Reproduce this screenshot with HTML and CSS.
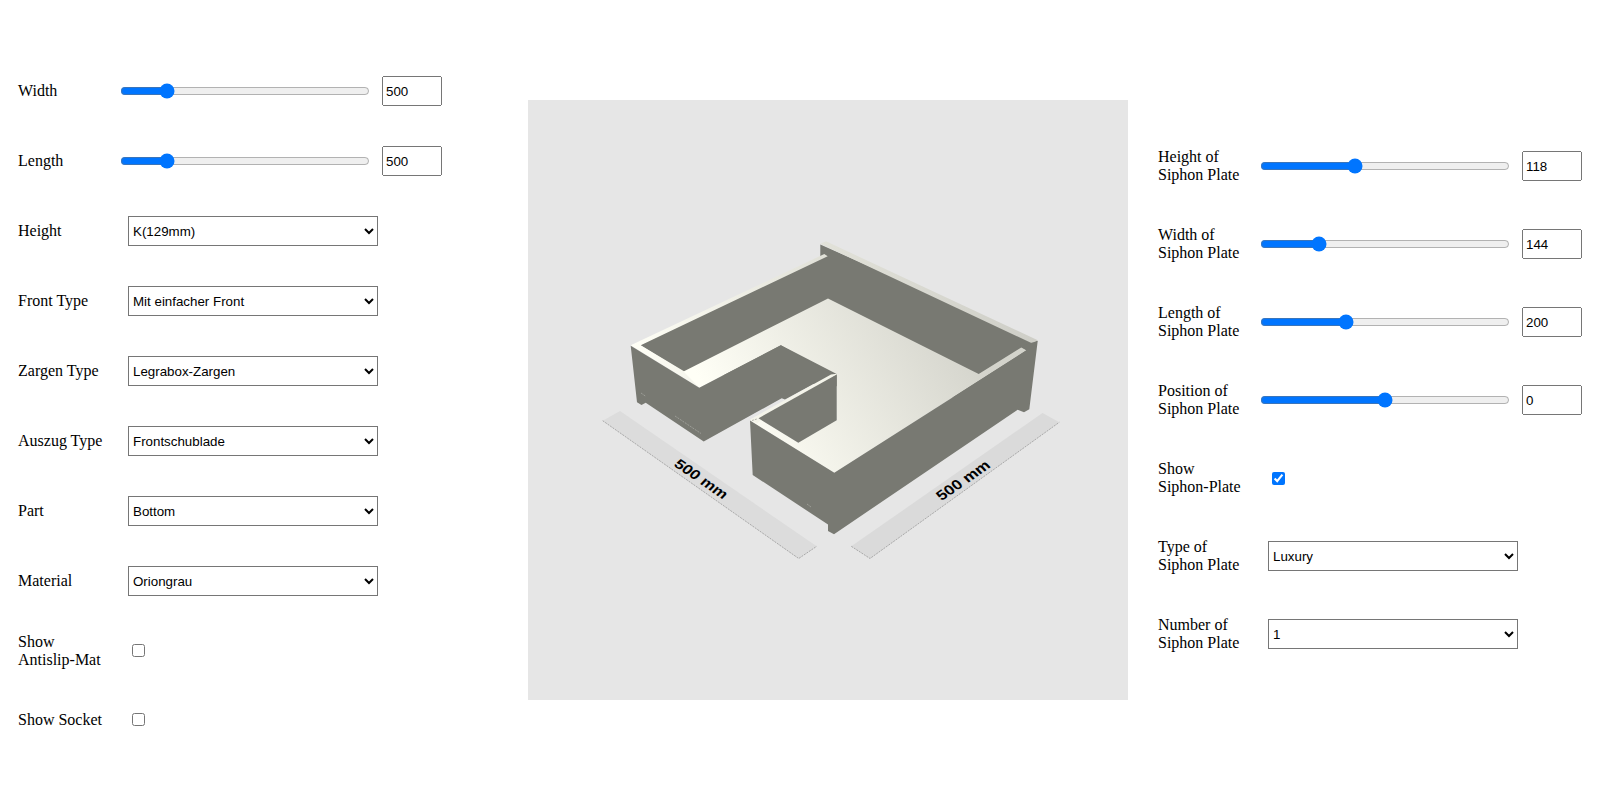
FILE: index.html
```html
<!DOCTYPE html>
<html lang="en">
<head>
<meta charset="utf-8">
<title>Drawer Configurator</title>
<link rel="stylesheet" href="styles.css">
</head>
<body>
<main class="configurator">
  <form class="panel panel-drawer">
    <div class="row"><label class="name">Width</label><input class="slider" type="range" min="0" max="1000" step="1" value="167"><input class="number" type="number" value="500"></div>
    <div class="row"><label class="name">Length</label><input class="slider" type="range" min="0" max="1000" step="1" value="167"><input class="number" type="number" value="500"></div>
    <div class="row"><label class="name">Height</label><select class="choice"><option>K(129mm)</option></select></div>
    <div class="row"><label class="name">Front Type</label><select class="choice"><option>Mit einfacher Front</option></select></div>
    <div class="row"><label class="name">Zargen Type</label><select class="choice"><option>Legrabox-Zargen</option></select></div>
    <div class="row"><label class="name">Auszug Type</label><select class="choice"><option>Frontschublade</option></select></div>
    <div class="row"><label class="name">Part</label><select class="choice"><option>Bottom</option></select></div>
    <div class="row"><label class="name">Material</label><select class="choice"><option>Oriongrau</option></select></div>
    <div class="row row-check"><label class="name">Show<br>Antislip-Mat</label><input class="check" type="checkbox"></div>
    <div class="row row-check"><label class="name">Show Socket</label><input class="check" type="checkbox"></div>
  </form>

  <svg class="viewer" viewBox="528 100 600 600" width="600" height="600">
    <defs>
      <linearGradient id="floor" gradientUnits="userSpaceOnUse" x1="700" y1="380" x2="917" y2="247">
        <stop offset="0" stop-color="#fffff6"/>
        <stop offset="1" stop-color="#d3d3cb"/>
      </linearGradient>
      <linearGradient id="ledge" gradientUnits="userSpaceOnUse" x1="820" y1="0" x2="1038" y2="0">
        <stop offset="0" stop-color="#e2e2d9"/>
        <stop offset="1" stop-color="#cecec7"/>
      </linearGradient>
      <linearGradient id="rim" gradientUnits="userSpaceOnUse" x1="631" y1="0" x2="828" y2="0">
        <stop offset="0" stop-color="#fffff6"/>
        <stop offset="1" stop-color="#e0e0d7"/>
      </linearGradient>
    </defs>

    <!-- front plate and inner walls -->
    <path fill="#787972" d="M820.3 244.5L1037.7 341L978.7 400L683 371.5L640 345L820.3 257Z"/>
    <path fill="url(#ledge)" d="M820.3 243.8L826 241.3L1037.8 340.3L1033 343.8Z"/>
    <path fill="url(#rim)" d="M630.7 345.3L824.3 254L827.7 256.3L640.7 345.3L684 371.2L700 388Z"/>

    <!-- bottom panel -->
    <path fill="url(#floor)" d="M683.5 371.5L828 298.5L978.7 374L1021.3 347.5L1026.5 350.3L834.3 473L750 420.5L759.3 418.5L798.3 442.7L836.7 420L836.7 374L781 345.3L699.3 387.8Z"/>

    <!-- left block -->
    <path fill="#787972" d="M630.7 345.8L699.3 387.8L780.7 345.3L831.5 374.2L785 399.5L781.7 398.2L703.7 441.5L645.7 402.8L641.5 405L637 402.3Z"/>

    <!-- right block -->
    <path fill="#787972" d="M750 420.5L834.3 472.7L1026.5 350.3L1020 346L1037.7 341L1029.3 409.3L1024 412.3L1017.7 409.7L834 534.2L828 531L828 524.5L752.7 475Z"/>

    <!-- siphon cut-out -->
    <path fill="#f4f4ea" d="M750 419.5L831 374.6L836.7 373.7L836.7 375L762 419L757 423.5Z"/>
    <path fill="#787972" d="M836.7 374.5L836.7 420.3L798.3 442.7L758.5 418.3Z"/>

    <g fill="none" stroke="#a5a69f" stroke-width="0.8" stroke-dasharray="2 1">
      <path d="M641 393L646 396.5M675 416L701 433.5M807 504L811 507M752 420.5L757 419"/>
    </g>

    <!-- dimension labels -->
    <path fill="#dcdcdc" d="M602.7 420.7L620 411L816.7 546.3L798.7 558.5Z"/>
    <path fill="#dadada" d="M851.3 546.3L1042.5 413L1059.3 422.3L870 558.5Z"/>
    <g fill="none" stroke="#a2a2a2" stroke-width="0.9" stroke-dasharray="2 1">
      <path d="M602.7 420.7L798.7 558.5L816.7 546.3"/>
      <path d="M851.3 546.3L870 558.5L1059.3 422.3"/>
    </g>
    <g class="dimension" text-anchor="middle">
      <text transform="matrix(.67 .46 -.49 .52 698 482.5)">500 mm</text>
      <text transform="matrix(.67 -.465 .5 .54 966.5 484)">500 mm</text>
    </g>
  </svg>

  <form class="panel panel-siphon">
    <div class="row"><label class="name">Height of<br>Siphon Plate</label><input class="slider" type="range" min="0" max="1000" step="1" value="372"><input class="number" type="number" value="118"></div>
    <div class="row"><label class="name">Width of<br>Siphon Plate</label><input class="slider" type="range" min="0" max="1000" step="1" value="218"><input class="number" type="number" value="144"></div>
    <div class="row"><label class="name">Length of<br>Siphon Plate</label><input class="slider" type="range" min="0" max="1000" step="1" value="333"><input class="number" type="number" value="200"></div>
    <div class="row"><label class="name">Position of<br>Siphon Plate</label><input class="slider" type="range" min="0" max="1000" step="1" value="500"><input class="number" type="number" value="0"></div>
    <div class="row"><label class="name">Show<br>Siphon-Plate</label><input class="check" type="checkbox" checked></div>
    <div class="row"><label class="name">Type of<br>Siphon Plate</label><select class="choice"><option>Luxury</option></select></div>
    <div class="row"><label class="name">Number of<br>Siphon Plate</label><select class="choice"><option>1</option></select></div>
  </form>
</main>
</body>
</html>
```
FILE: styles.css
```css
* {
  box-sizing: border-box;
}

body {
  margin: 0;
  background: #fff;
  color: #000;
  font: 16px/18px "Liberation Serif", serif;
}

.configurator {
  display: flex;
  align-items: flex-start;
  width: 1604px;
  height: 789px;
  overflow: hidden;
}

.panel {
  flex: none;
  margin: 0;
}

.panel-drawer {
  width: 528px;
  padding: 56px 0 0 18px;
}

.panel-siphon {
  width: 476px;
  padding: 127px 0 0 30px;
}

.row {
  display: flex;
  align-items: center;
  height: 70px;
}

.row-check {
  height: 69px;
}

.panel-siphon .row {
  height: 78px;
}

.name {
  flex: none;
  width: 102px;
  white-space: nowrap;
}

.slider {
  width: 250px;
  height: 16px;
  margin: 0 12px 0 0;
}

.number {
  width: 60px;
  height: 30px;
  margin: 0;
  font: 13.333px "Liberation Sans", Arial, sans-serif;
}

.choice {
  width: 250px;
  height: 30px;
  margin: 0 0 0 8px;
  color: #000;
  background: #fff;
  font: 13.333px "Liberation Sans", Arial, sans-serif;
}

.check {
  width: 13px;
  height: 13px;
  margin: 0 0 0 12px;
}

.viewer {
  flex: none;
  display: block;
  margin-top: 100px;
  background: #e6e6e6;
}

.dimension {
  fill: #000;
  font: bold 20px "Liberation Sans", Arial, sans-serif;
}
```
